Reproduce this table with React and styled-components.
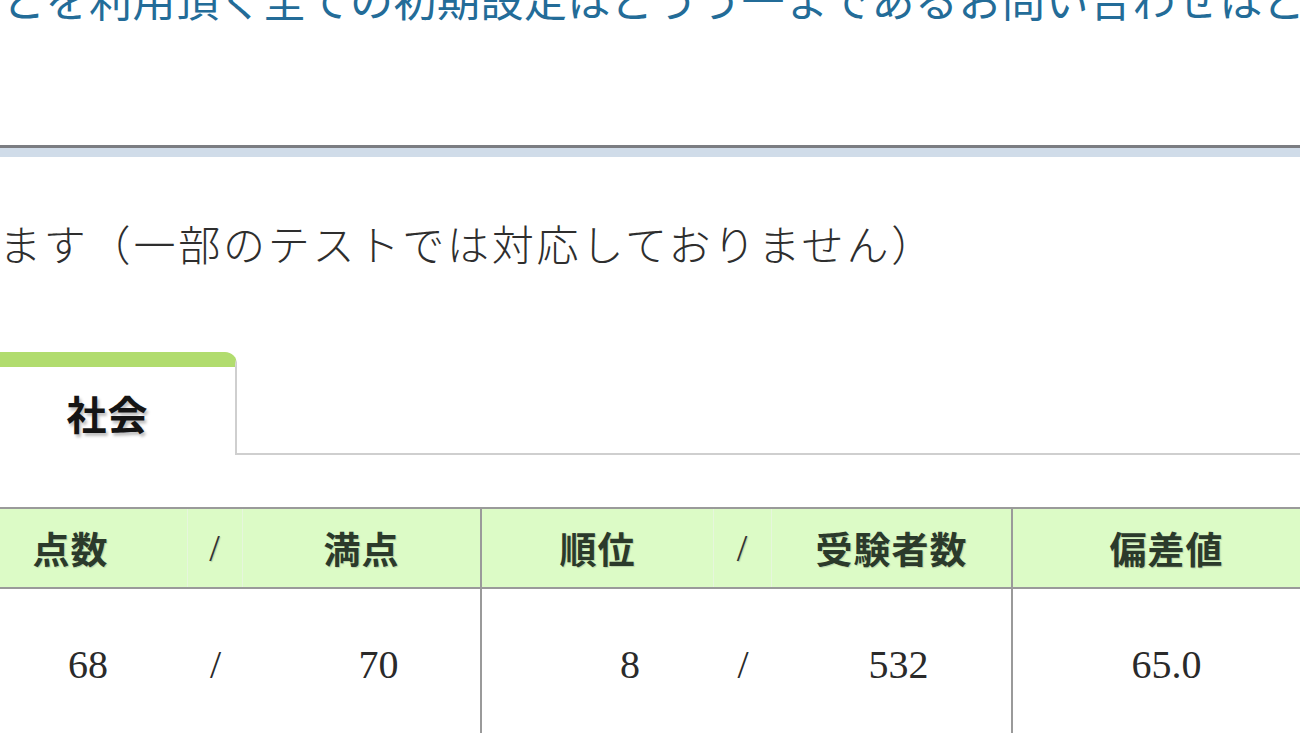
import React from 'react'
import styled, { createGlobalStyle } from 'styled-components'

const Global = createGlobalStyle`
  html, body {
    margin: 0;
    padding: 0;
    background: #ffffff;
    overflow: hidden;
  }
  body {
    font-family: "Liberation Serif", "Noto Sans CJK JP", serif;
  }
`

const Page = styled.div`
  width: 1300px;
  height: 733px;
  overflow: hidden;
  position: relative;
`

const LinkLine = styled.div`
  margin-top: -24px;
  height: 44px;
  line-height: 44px;
  font-size: 43px;
  white-space: nowrap;
  color: #236c98;
  font-family: "Noto Sans CJK JP", sans-serif;
  margin-left: 2px;
  letter-spacing: 0.5px;
`

const Divider = styled.div`
  margin-top: 125px;
  height: 3px;
  background: #7b7d82;
`

const Band = styled.div`
  height: 9px;
  background: #d0dce9;
`

const Notice = styled.p`
  margin: 61px 0 0 -1px;
  height: 50px;
  line-height: 50px;
  font-size: 42px;
  white-space: nowrap;
  color: #2e2e2e;
  font-family: "Noto Sans CJK JP", sans-serif;
  font-weight: 300;
  letter-spacing: 2.8px;
`

const TabRow = styled.div`
  margin-top: 84px;
  display: flex;
  align-items: flex-end;
  margin-left: -30px;
`

const Tab = styled.div`
  width: 267px;
  height: 103px;
  border-top: 15px solid #b1dc6e;
  border-right: 2px solid #cfcfcf;
  border-top-right-radius: 12px;
  box-sizing: border-box;
  display: flex;
  align-items: center;
  justify-content: center;
  background: #fff;
`

const TabLabel = styled.span`
  font-family: "Noto Sans CJK JP", sans-serif;
  font-weight: 700;
  font-size: 40px;
  color: #151515;
  letter-spacing: 1px;
  text-shadow: 2px 3px 3px rgba(0, 0, 0, 0.25);
  margin-left: 10px;
  margin-top: 4px;
`

const TabLine = styled.div`
  flex: 1;
  height: 2px;
  background: #cfcfcf;
`

const Table = styled.div`
  margin-top: 52px;
  margin-left: -46px;
  width: 1366px;
  border-top: 2px solid #9a9a9a;
`

const Row = styled.div`
  display: grid;
  grid-template-columns: 234px 55px 237px 2px 232px 58px 239px 2px 307px;
  height: ${p => p.h}px;
  background: ${p => p.head ? '#dcfbc6' : '#fff'};
  border-bottom: ${p => p.head ? '2px solid #9a9a9a' : 'none'};
`

const Cell = styled.div`
  display: flex;
  align-items: center;
  justify-content: center;
  padding-left: ${p => p.shift || 0}px;
  border-right: ${p => p.faint ? '1px solid #e6f6dc' : 'none'};
  color: ${p => p.head ? '#2b3a2b' : '#2a2a2a'};
  font-size: ${p => p.head ? 37 : 40}px;
  font-weight: ${p => p.head ? 700 : 400};
  font-family: ${p => p.head ? '"Noto Sans CJK JP", sans-serif' : '"Liberation Serif", serif'};
  letter-spacing: ${p => p.head ? '1px' : '0'};
  text-shadow: ${p => p.head ? '1px 1px 1px rgba(0,0,0,0.15)' : 'none'};
`

const Slash = styled(Cell)`
  font-family: "Liberation Serif", serif;
  font-weight: 400;
  font-size: 38px;
  color: #333;
`

const Rule = styled.div`
  background: #9a9a9a;
`

const head = ['点数', '/', '満点', null, '順位', '/', '受験者数', null, '偏差値']
const body = [
  ['68', 34], ['/', 0], ['70', 34], null, ['8', 64], ['/', 0], ['532', 14], null, ['65.0', 0]
]

export default function App() {
  return (
    <Page>
      <Global />
      <LinkLine>とを利用頂く全ての初期設定はどうう一まであるお問い合わせはどう</LinkLine>
      <Divider />
      <Band />
      <Notice>ます（一部のテストでは対応しておりません）</Notice>
      <TabRow>
        <Tab><TabLabel>社会</TabLabel></Tab>
        <TabLine />
      </TabRow>
      <Table>
        <Row head h={78}>
          {head.map((t, i) => {
            if (t === null) return <Rule key={i} />
            if (t === '/') return <Slash key={i} head faint>{t}</Slash>
            return <Cell key={i} head faint={i === 0 || i === 4}>{t}</Cell>
          })}
        </Row>
        <Row h={150}>
          {body.map((c, i) => c === null
            ? <Rule key={i} />
            : <Cell key={i} shift={c[1]}>{c[0]}</Cell>)}
        </Row>
      </Table>
    </Page>
  )
}
